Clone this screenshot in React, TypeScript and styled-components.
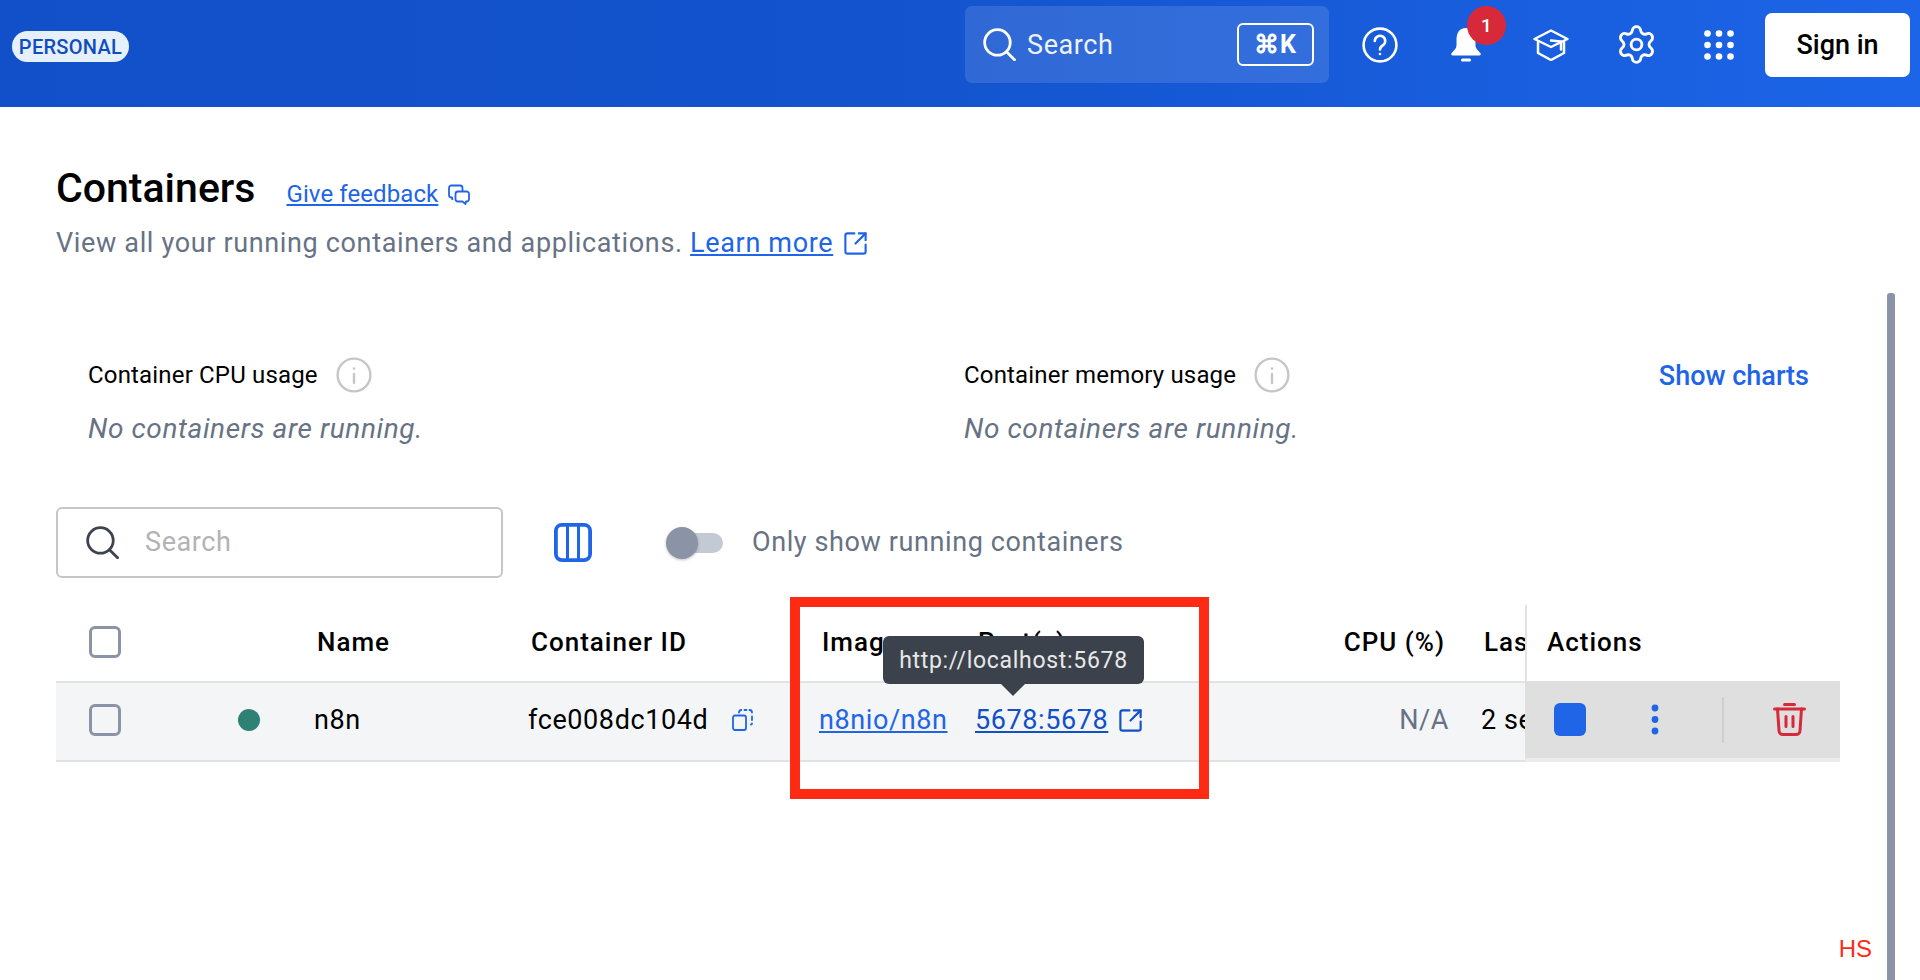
import React, { FC } from "react";
import styled, { createGlobalStyle } from "styled-components";
import { Settings, SquareArrowOutUpRight } from "lucide-react";

const BLUE = "#2065e8";
const GREY = "#677285";
const FONT = `Roboto, "Liberation Sans", sans-serif`;

const GlobalStyle = createGlobalStyle`
  html, body {
    margin: 0;
    background: #fff;
    overflow: hidden;
  }
  body {
    font-family: ${FONT};
    color: #000;
  }
`;

const SearchIcon: FC<{ size: number; color: string }> = ({ size, color }) => (
  <svg width={size} height={size} viewBox="0 0 32 32" fill="none" stroke={color} strokeWidth="2.7" strokeLinecap="round">
    <circle cx="14" cy="14" r="12.4" />
    <path d="M23 23.2 30.6 30.8" />
  </svg>
);

const HelpIcon = () => (
  <svg width="36" height="36" viewBox="0 0 36 36" fill="none" stroke="#fff" strokeWidth="2.6" strokeLinecap="round">
    <circle cx="18" cy="18" r="16.4" />
    <path d="M12.8 14a5.2 5.2 0 1 1 8 4.4c-1.8 1.1-2.8 2-2.8 4" />
    <circle cx="18" cy="27" r="1.3" fill="#fff" stroke="none" />
  </svg>
);

const BellIcon = () => (
  <svg width="32" height="34" viewBox="0 0 32 34" fill="#fff">
    <path d="M16 0C9 0 6.500 5.500 6.500 12v5.500c0 3-3.300 5.500-5 7.800C.7 26.500 1.300 27.500 3 27.500h26c1.700 0 2.300-1 1.500-2.200-1.700-2.300-5-4.800-5-7.800V12C25.500 5.500 23 0 16 0Z" />
    <rect x="11" y="30.500" width="10" height="3" rx="1.500" />
  </svg>
);

const CapIcon = () => (
  <svg width="36" height="32" viewBox="0 0 36 32" fill="none" stroke="#fff" strokeWidth="2.500" strokeLinecap="round" strokeLinejoin="round">
    <path d="M18 1.500 34.500 10 18 18 1.500 10Z" />
    <path d="M5 13v11l13 7 13-7V13" />
    <path d="M18 11.500l10 1v8" />
  </svg>
);

const GridIcon = () => (
  <svg width="30" height="30" viewBox="0 0 30 30" fill="#fff">
    {[3.500, 15, 26.500].map((y) =>
      [3.500, 15, 26.500].map((x) => <circle key={`${x}-${y}`} cx={x} cy={y} r="3.300" />)
    )}
  </svg>
);

const FeedbackIcon = () => (
  <svg width="22" height="22" viewBox="0 0 22 22" fill="none" stroke={BLUE} strokeWidth="1.800" strokeLinejoin="round">
    <path d="M4.500 16 4 13.500H3.500A2.500 2.500 0 0 1 1 11V4A2.500 2.500 0 0 1 3.500 1.500H12A2.500 2.500 0 0 1 14.500 4V7" />
    <path d="M10 7.500h8.500A2.500 2.500 0 0 1 21 10v5a2.500 2.500 0 0 1-2.500 2.500H18l-.5 2.500-3-2.500H10A2.500 2.500 0 0 1 7.500 15v-5A2.500 2.500 0 0 1 10 7.500Z" />
  </svg>
);

const InfoIcon = () => (
  <svg width="36" height="36" viewBox="0 0 36 36" fill="none" stroke="#c6c6c6" strokeWidth="2.400" strokeLinecap="round">
    <circle cx="18" cy="18" r="16.400" />
    <path d="M18 17v9" />
    <circle cx="18" cy="11.500" r="1.300" fill="#c6c6c6" stroke="none" />
  </svg>
);

const ColumnsIcon = () => (
  <svg width="38" height="39" viewBox="0 0 38 39" fill="none" stroke={BLUE} strokeWidth="3.800">
    <rect x="1.900" y="1.900" width="34.200" height="35.200" rx="6" />
    <path d="M13.500 2v35M24.500 2v35" strokeWidth="3" />
  </svg>
);

const CopyIcon = () => (
  <svg width="21" height="22" viewBox="0 0 21 22" fill="none" stroke={BLUE} strokeWidth="1.800" strokeLinecap="round">
    <rect x="1" y="6.500" width="13" height="14.500" rx="2" />
    <path d="M7 3.500c0-1.500.8-2.500 2.300-2.500M12.500 1h2M17.500 1c1.500 0 2.500 1 2.500 2.500M20 7.500v3.500M20 14.500c0 .7-.5 1-1 1" />
  </svg>
);

const KebabIcon = () => (
  <svg width="8" height="31" viewBox="0 0 8 31" fill={BLUE}>
    <circle cx="4" cy="4" r="3.400" />
    <circle cx="4" cy="15.500" r="3.400" />
    <circle cx="4" cy="27" r="3.400" />
  </svg>
);

const TrashIcon = () => (
  <svg width="33" height="33" viewBox="0 0 33 33" fill="none" stroke="#d8293b" strokeWidth="3" strokeLinecap="round" strokeLinejoin="round">
    <path d="M11.500 1.500h10M1.500 6h30" />
    <path d="M4.500 6l1.500 21.500a4 4 0 0 0 4 4h13a4 4 0 0 0 4-4L28.500 6" />
    <path d="M13 13.500v10M20 13.500v10" />
  </svg>
);

const App: FC = () => (
  <Page>
    <GlobalStyle />
    <TopBar>
      <Badge>PERSONAL</Badge>
      <TopRight>
        <TopSearch>
          <SearchIcon size={33} color="#fff" />
          <TopSearchText>Search</TopSearchText>
          <Shortcut>⌘K</Shortcut>
        </TopSearch>
        <IconButton $nudge={-1}>
          <HelpIcon />
        </IconButton>
        <IconButton>
          <BellIcon />
          <Notification>1</Notification>
        </IconButton>
        <IconButton>
          <CapIcon />
        </IconButton>
        <IconButton $nudge={1}>
          <Settings size={43} color="#fff" strokeWidth={1.6} />
        </IconButton>
        <IconButton $nudge={-2}>
          <GridIcon />
        </IconButton>
        <SignIn>Sign in</SignIn>
      </TopRight>
    </TopBar>

    <Main>
      <TitleRow>
        <Title>Containers</Title>
        <FeedbackLink>Give feedback</FeedbackLink>
        <FeedbackIcon />
      </TitleRow>
      <Subtitle>
        View all your running containers and applications. <LearnLink>Learn more</LearnLink>
        <SquareArrowOutUpRight size={27} color={BLUE} strokeWidth={1.9} />
      </Subtitle>

      <Charts>
        <ChartBlock>
          <ChartLabel>
            Container CPU usage
            <InfoIcon />
          </ChartLabel>
          <NoData>No containers are running.</NoData>
        </ChartBlock>
        <ChartBlock>
          <ChartLabel>
            Container memory usage
            <InfoIcon />
          </ChartLabel>
          <NoData>No containers are running.</NoData>
        </ChartBlock>
        <ShowCharts>Show charts</ShowCharts>
      </Charts>

      <Filters>
        <FilterSearch>
          <SearchIcon size={33} color="#3d4450" />
          <Placeholder>Search</Placeholder>
        </FilterSearch>
        <ColumnsIcon />
        <Toggle>
          <Thumb />
        </Toggle>
        <ToggleLabel>Only show running containers</ToggleLabel>
      </Filters>

      <Table>
        <Scrolling>
          <HeadRow>
            <CheckCell>
              <Checkbox />
            </CheckCell>
            <span />
            <HeadCell>Name</HeadCell>
            <HeadCell>Container ID</HeadCell>
            <HeadCell>Image</HeadCell>
            <HeadCell>Port(s)</HeadCell>
            <HeadCell $right>CPU (%)</HeadCell>
            <HeadCell>Last started</HeadCell>
          </HeadRow>
          <BodyRow>
            <CheckCell>
              <Checkbox />
            </CheckCell>
            <StatusDot />
            <Cell>n8n</Cell>
            <Cell>
              fce008dc104d
              <CopySlot>
                <CopyIcon />
              </CopySlot>
            </Cell>
            <Cell>
              <ImageLink>n8nio/n8n</ImageLink>
            </Cell>
            <Cell>
              <PortLink>
                5678:5678
                <Tooltip>http://localhost:5678</Tooltip>
              </PortLink>
              <ExternalSlot>
                <SquareArrowOutUpRight size={27} color="#1150c8" strokeWidth={1.9} />
              </ExternalSlot>
            </Cell>
            <CpuCell>N/A</CpuCell>
            <Cell>2 seconds ago</Cell>
          </BodyRow>
        </Scrolling>
        <ActionsColumn>
          <ActionsHead>Actions</ActionsHead>
          <ActionsBody>
            <StopButton />
            <MoreButton>
              <KebabIcon />
            </MoreButton>
            <ActionDivider />
            <DeleteButton>
              <TrashIcon />
            </DeleteButton>
          </ActionsBody>
        </ActionsColumn>
      </Table>
    </Main>

    <ScrollThumb />
    <Annotation />
    <Initials>HS</Initials>
  </Page>
);

const Page = styled.div`
  position: relative;
  width: 1920px;
  height: 980px;
  overflow: hidden;
`;

const TopBar = styled.header`
  height: 107px;
  box-sizing: border-box;
  padding: 0 10px 18px 12px;
  display: flex;
  align-items: center;
  justify-content: space-between;
  background: linear-gradient(90deg, #1150c8 0%, #1353cd 45%, #1c65e8 100%);
`;

const Badge = styled.div`
  height: 31px;
  width: 117px;
  margin-top: 4px;
  border-radius: 16px;
  display: flex;
  align-items: center;
  justify-content: center;
  background: #e6f0fb;
  color: #0f4cc0;
  font-size: 20px;
  font-weight: 500;
  letter-spacing: 0.3px;
`;

const TopRight = styled.div`
  display: flex;
  align-items: center;
`;

const TopSearch = styled.div`
  width: 364px;
  height: 77px;
  box-sizing: border-box;
  padding: 0 15px 0 18px;
  margin-right: 9px;
  border-radius: 7px;
  display: flex;
  align-items: center;
  background: rgba(255, 255, 255, 0.12);
  color: #fff;
`;

const TopSearchText = styled.span`
  margin-left: 11px;
  font-size: 27px;
  letter-spacing: 0.6px;
  flex: 1;
  opacity: 0.92;
`;

const Shortcut = styled.span`
  width: 77px;
  height: 43px;
  box-sizing: border-box;
  border: 2px solid #fff;
  border-radius: 6px;
  display: flex;
  align-items: center;
  justify-content: center;
  font-size: 25px;
  font-weight: 700;
  letter-spacing: 1px;
`;

const IconButton = styled.div<{ $nudge?: number }>`
  position: relative;
  width: 85px;
  height: 40px;
  display: flex;
  align-items: center;
  justify-content: center;
  svg {
    transform: translateX(${(p) => p.$nudge ?? 0}px);
  }
`;

const Notification = styled.span`
  position: absolute;
  top: -19px;
  left: 44px;
  width: 39px;
  height: 39px;
  border-radius: 50%;
  display: flex;
  align-items: center;
  justify-content: center;
  background: #d8293b;
  color: #fff;
  font-size: 19px;
  font-weight: 500;
`;

const SignIn = styled.button`
  width: 145px;
  height: 64px;
  margin-left: 2px;
  border: 0;
  border-radius: 7px;
  background: #fff;
  color: #000;
  font-family: ${FONT};
  font-size: 27px;
  font-weight: 500;
`;

const Main = styled.main`
  width: 1840px;
  box-sizing: border-box;
  padding: 57px 0 0 56px;
`;

const TitleRow = styled.div`
  height: 48px;
  display: flex;
  align-items: baseline;
  svg {
    align-self: center;
    margin: 14px 0 0 10px;
  }
`;

const Title = styled.h1`
  margin: 0 31px 0 0;
  font-size: 41px;
  line-height: 48px;
  font-weight: 500;
`;

const FeedbackLink = styled.a`
  color: ${BLUE};
  font-size: 24px;
  letter-spacing: 0.1px;
  text-decoration: underline;
`;

const Subtitle = styled.div`
  margin-top: 15px;
  height: 32px;
  display: flex;
  align-items: center;
  white-space: pre;
  color: ${GREY};
  font-size: 27px;
  letter-spacing: 0.65px;
  svg {
    margin-left: 9px;
  }
`;

const LearnLink = styled.a`
  color: ${BLUE};
  text-decoration: underline;
`;

const Charts = styled.section`
  margin-top: 98px;
  padding: 0 31px 0 32px;
  display: grid;
  grid-template-columns: 876px 1fr auto;
  align-items: start;
`;

const ChartBlock = styled.div``;

const ChartLabel = styled.div`
  height: 36px;
  display: flex;
  align-items: center;
  gap: 18px;
  font-size: 24px;
  letter-spacing: 0.17px;
`;

const NoData = styled.div`
  margin-top: 20px;
  line-height: 32px;
  color: ${GREY};
  font-size: 28px;
  font-style: italic;
  letter-spacing: 0.6px;
`;

const ShowCharts = styled.a`
  line-height: 38px;
  white-space: nowrap;
  color: ${BLUE};
  font-size: 27px;
  font-weight: 500;
`;

const Filters = styled.div`
  margin-top: 62px;
  height: 71px;
  display: flex;
  align-items: center;
`;

const FilterSearch = styled.div`
  width: 447px;
  height: 71px;
  box-sizing: border-box;
  margin-right: 51px;
  padding-left: 28px;
  border: 2px solid #c6c6c6;
  border-radius: 6px;
  display: flex;
  align-items: center;
`;

const Placeholder = styled.span`
  margin-left: 26px;
  padding-bottom: 1px;
  color: #b3b3b3;
  font-size: 27px;
  letter-spacing: 0.6px;
`;

const Toggle = styled.div`
  position: relative;
  width: 53px;
  height: 20px;
  margin-left: 78px;
  border-radius: 10px;
  background: #c4cad4;
`;

const Thumb = styled.span`
  position: absolute;
  left: -4px;
  top: -6px;
  width: 32px;
  height: 32px;
  border-radius: 50%;
  background: #8b94a6;
  box-shadow: 0 1px 3px rgba(0, 0, 0, 0.25);
`;

const ToggleLabel = styled.span`
  margin-left: 29px;
  padding-bottom: 1px;
  color: ${GREY};
  font-size: 27px;
  letter-spacing: 0.6px;
`;

const Table = styled.div`
  margin-top: 27px;
  display: flex;
`;

const Scrolling = styled.div`
  width: 1469px;
  overflow: hidden;
`;

const Columns = styled.div`
  display: grid;
  grid-template-columns: 182px 76px 214px 291px 156px 325px 181px 260px;
  align-items: center;
`;

const HeadRow = styled(Columns)`
  height: 74px;
  padding-bottom: 2px;
  border-bottom: 2px solid #e1e2e4;
`;

const BodyRow = styled(Columns)`
  height: 74px;
  padding-bottom: 3px;
  background: #f4f5f7;
  border-bottom: 2px solid #e1e2e4;
`;

const CheckCell = styled.div`
  padding-left: 33px;
  display: flex;
`;

const Checkbox = styled.span`
  width: 32px;
  height: 32px;
  box-sizing: border-box;
  border: 3px solid #8b94a6;
  border-radius: 6px;
`;

const HeadCell = styled.div<{ $right?: boolean }>`
  padding: ${(p) => (p.$right ? "0 36px 0 0" : "0 0 0 3px")};
  text-align: ${(p) => (p.$right ? "right" : "left")};
  white-space: nowrap;
  font-size: 26px;
  font-weight: 500;
  letter-spacing: 1px;
`;

const StatusDot = styled.span`
  width: 22px;
  height: 22px;
  border-radius: 50%;
  background: #2f8075;
`;

const Cell = styled.div`
  display: flex;
  align-items: center;
  white-space: nowrap;
  font-size: 27px;
  letter-spacing: 0.6px;
`;

const CopySlot = styled.span`
  margin-left: 24px;
  display: flex;
`;

const ExternalSlot = styled.span`
  margin-left: 9px;
  display: flex;
`;

const ImageLink = styled.a`
  color: ${BLUE};
  text-decoration: underline;
`;

const PortLink = styled.a`
  position: relative;
  color: #1150c8;
  text-decoration: underline;
`;

const Tooltip = styled.span`
  position: absolute;
  left: -92px;
  bottom: calc(100% + 20px);
  width: 261px;
  height: 48px;
  border-radius: 6px;
  display: flex;
  align-items: center;
  justify-content: center;
  background: #3c424c;
  color: #e8e8e8;
  font-size: 23px;
  letter-spacing: 0.7px;
  z-index: 2;
  &::after {
    content: "";
    position: absolute;
    left: 118px;
    top: 48px;
    border-style: solid;
    border-width: 12px 12px 0;
    border-color: #3c424c transparent transparent;
  }
`;

const CpuCell = styled.div`
  padding-right: 32px;
  text-align: right;
  color: ${GREY};
  font-size: 27px;
  letter-spacing: 0.6px;
`;

const ActionsColumn = styled.div`
  width: 315px;
`;

const ActionsHead = styled.div`
  height: 76px;
  box-sizing: border-box;
  padding: 0 0 2px 20px;
  border-left: 2px solid #e1e2e4;
  display: flex;
  align-items: center;
  font-size: 26px;
  font-weight: 500;
  letter-spacing: 1px;
`;

const ActionsBody = styled.div`
  height: 77px;
  padding-left: 29px;
  display: flex;
  align-items: center;
  background: #dfdfdf;
  border-bottom: 4px solid #ebebec;
`;

const StopButton = styled.span`
  width: 32px;
  height: 33px;
  border-radius: 6px;
  background: ${BLUE};
`;

const MoreButton = styled.span`
  margin-left: 65px;
  display: flex;
`;

const ActionDivider = styled.span`
  width: 2px;
  height: 46px;
  margin-left: 63px;
  background: #cfcfcf;
`;

const DeleteButton = styled.span`
  margin-left: 49px;
  display: flex;
`;

const ScrollThumb = styled.div`
  position: absolute;
  left: 1887px;
  top: 293px;
  bottom: 0;
  width: 8px;
  border-radius: 3px 3px 0 0;
  background: #8b94a6;
`;

const Annotation = styled.div`
  position: absolute;
  left: 790px;
  top: 597px;
  width: 419px;
  height: 202px;
  box-sizing: border-box;
  border: 10px solid #ff2a14;
`;

const Initials = styled.div`
  position: absolute;
  right: 48px;
  bottom: 17px;
  color: #ff2a14;
  font-family: "Liberation Sans", Arial, sans-serif;
  font-size: 24px;
`;

export default App;
